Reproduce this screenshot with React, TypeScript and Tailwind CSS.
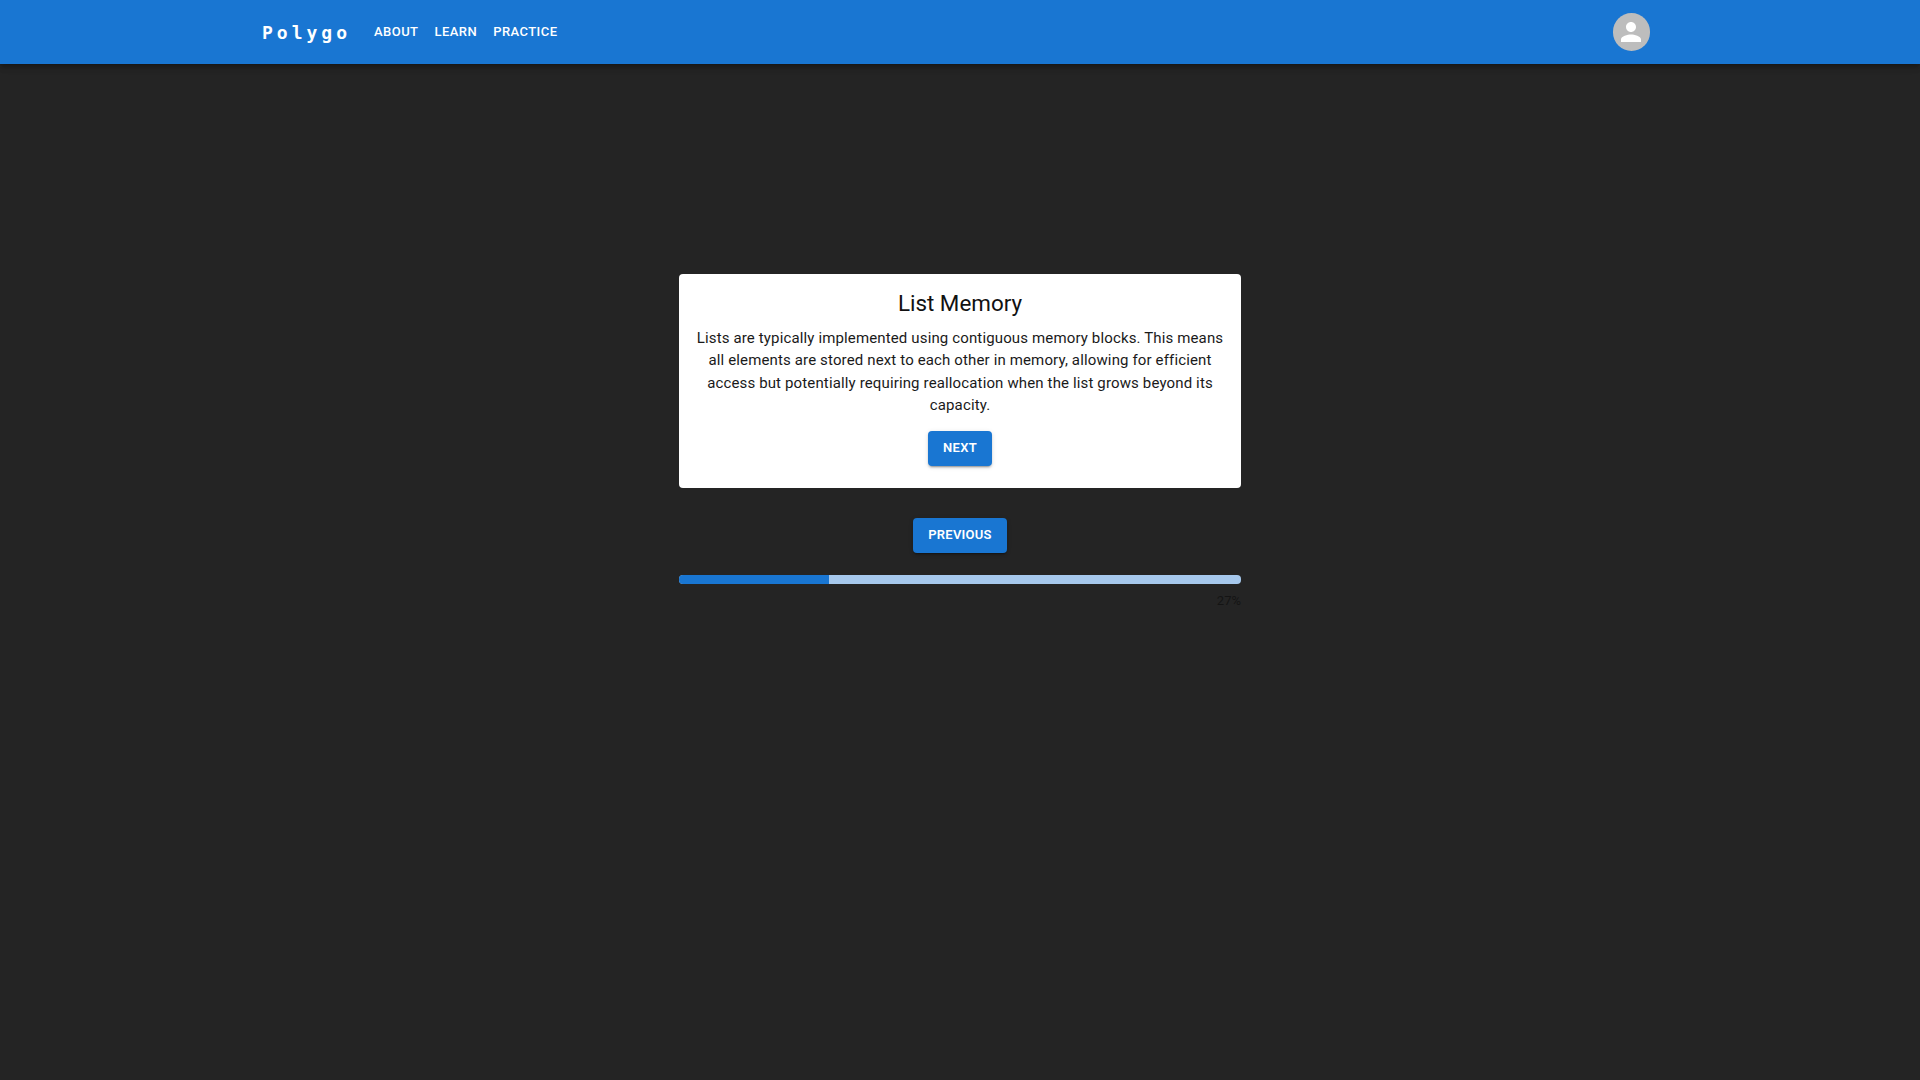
const navLinks = ["About", "Learn", "Practice"];

const UserIcon = () => (
  <svg viewBox="0 0 24 24" className="h-[30px] w-[30px] fill-white">
    <path d="M12 12c2.21 0 4-1.79 4-4s-1.79-4-4-4-4 1.79-4 4 1.79 4 4 4zm0 2c-2.67 0-8 1.34-8 4v2h16v-2c0-2.66-5.33-4-8-4z" />
  </svg>
);

const Header = () => (
  <header className="h-16 bg-[#1976d2] shadow-[0_2px_4px_-1px_rgba(0,0,0,0.2),0_4px_5px_0_rgba(0,0,0,0.14),0_1px_10px_0_rgba(0,0,0,0.12)]">
    <div className="ml-[262px] mr-[270px] flex h-full items-center">
      <span className="mr-[23px] pt-[1px] font-['DejaVu_Sans_Mono',monospace] text-[18px] font-bold tracking-[4px] text-white">
        Polygo
      </span>
      <nav className="flex items-center gap-[16px]">
        {navLinks.map((link) => (
          <a
            key={link}
            className="text-[13px] font-medium uppercase leading-[22px] tracking-[0.45px] text-white"
          >
            {link}
          </a>
        ))}
      </nav>
      <button className="ml-auto flex h-[37.5px] w-[37.5px] items-center justify-center rounded-full bg-[#bdbdbd]">
        <UserIcon />
      </button>
    </div>
  </header>
);

const ActionButton = ({ label }: { label: string }) => (
  <button className="h-[35px] rounded-[4px] bg-[#1976d2] px-[15px] text-[13px] font-semibold uppercase tracking-[0.02em] text-white shadow-[0_3px_1px_-2px_rgba(0,0,0,0.2),0_2px_2px_0_rgba(0,0,0,0.14),0_1px_5px_0_rgba(0,0,0,0.12)]">
    {label}
  </button>
);

export default function App() {
  return (
    <div className="min-h-[1080px] bg-[#242424] font-['Roboto',sans-serif]">
      <Header />
      <main className="mx-auto flex w-[562px] flex-col items-center pt-[210px]">
        <section className="flex w-full flex-col items-center rounded-[4px] bg-white px-[16px] pb-[22px] pt-[13px] text-center text-[#1a1a1a]">
          <h2 className="text-[22.4px] leading-[32px] text-[#111]">List Memory</h2>
          <p className="mt-[8px] text-[15px] leading-[22.4px] tracking-[0.14px]">
            Lists are typically implemented using contiguous memory blocks. This
            means all elements are stored next to each other in memory, allowing
            for efficient access but potentially requiring reallocation when the
            list grows beyond its capacity.
          </p>
          <div className="mt-[14px]">
            <ActionButton label="Next" />
          </div>
        </section>
        <div className="mt-[30px]">
          <ActionButton label="Previous" />
        </div>
        <div className="mt-[22px] h-[9px] w-full overflow-hidden rounded-[4px] bg-[#a6c8ec]">
          <div className="h-full w-[150px] bg-[#1976d2]" />
        </div>
        <span className="mt-[8px] self-end text-[13px] leading-[18px] text-[#141414]">27%</span>
      </main>
    </div>
  );
}
